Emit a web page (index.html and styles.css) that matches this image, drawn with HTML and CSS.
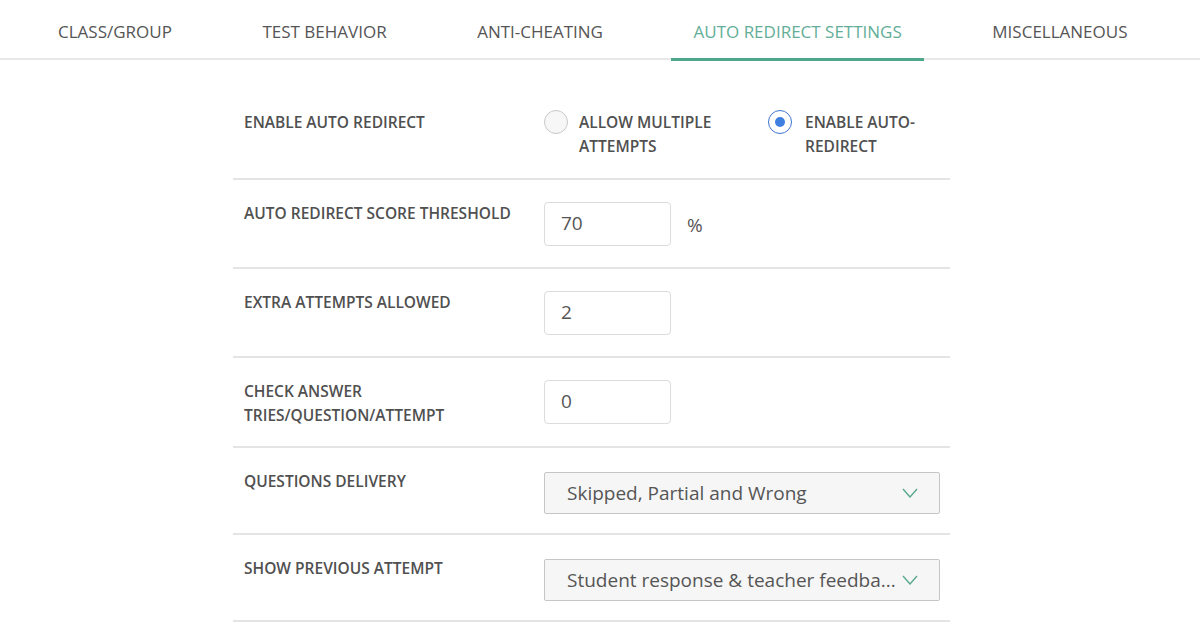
FILE: index.html
```html
<!DOCTYPE html>
<html>
<head>
<meta charset="utf-8">
<link rel="stylesheet" href="styles.css">
</head>
<body>
<nav class="tabs">
  <div class="tab">CLASS/GROUP</div>
  <div class="tab">TEST BEHAVIOR</div>
  <div class="tab">ANTI-CHEATING</div>
  <div class="tab active">AUTO REDIRECT SETTINGS</div>
  <div class="tab">MISCELLANEOUS</div>
</nav>
<main class="settings">
  <div class="row">
    <div class="label">ENABLE AUTO REDIRECT</div>
    <div class="control radios">
      <div class="radio-opt">
        <span class="radio"></span>
        <span class="radio-text">ALLOW MULTIPLE<br>ATTEMPTS</span>
      </div>
      <div class="radio-opt">
        <span class="radio checked"></span>
        <span class="radio-text">ENABLE AUTO-<br>REDIRECT</span>
      </div>
    </div>
  </div>
  <div class="row">
    <div class="label">AUTO REDIRECT SCORE THRESHOLD</div>
    <div class="control">
      <div class="input">70</div>
      <span class="unit">%</span>
    </div>
  </div>
  <div class="row">
    <div class="label">EXTRA ATTEMPTS ALLOWED</div>
    <div class="control">
      <div class="input">2</div>
    </div>
  </div>
  <div class="row">
    <div class="label">CHECK ANSWER<br>TRIES/QUESTION/ATTEMPT</div>
    <div class="control">
      <div class="input">0</div>
    </div>
  </div>
  <div class="row">
    <div class="label">QUESTIONS DELIVERY</div>
    <div class="control">
      <div class="select">
        <span class="select-text">Skipped, Partial and Wrong</span>
        <svg class="chev" width="16" height="10" viewBox="0 0 16 10"><path d="M1 1 L8 9 L15 1" fill="none" stroke="#5aa88e" stroke-width="1.4"/></svg>
      </div>
    </div>
  </div>
  <div class="row">
    <div class="label">SHOW PREVIOUS ATTEMPT</div>
    <div class="control">
      <div class="select">
        <span class="select-text">Student response &amp; teacher feedba...</span>
        <svg class="chev" width="16" height="10" viewBox="0 0 16 10"><path d="M1 1 L8 9 L15 1" fill="none" stroke="#5aa88e" stroke-width="1.4"/></svg>
      </div>
    </div>
  </div>
</main>
</body>
</html>
```

FILE: styles.css
```css
html, body {
  margin: 0;
  padding: 0;
  background: #fff;
}
body {
  font-family: "Open Sans", "Noto Sans", sans-serif;
  color: #444;
}
.tabs {
  display: flex;
  gap: 46.5px;
  padding-left: 36px;
  height: 58px;
  border-bottom: 2px solid #e8e8e8;
}
.tab {
  padding: 0 22px;
  font-size: 17px;
  line-height: 64px;
  height: 58px;
  color: #555;
  box-sizing: border-box;
  white-space: nowrap;
}
.tab.active {
  color: #63ae98;
  border-bottom: 3px solid #4ea68b;
  height: 61px;
  margin-bottom: -3px;
}
.settings {
  width: 717px;
  margin: 29px 0 0 233px;
}
.row {
  display: flex;
  align-items: flex-start;
  padding: 21px 11px 19px 11px;
  border-bottom: 2px solid #e4e4e4;
}
.label {
  width: 300px;
  flex: none;
  font-size: 15.5px;
  font-weight: 600;
  line-height: 24px;
  color: #505050;
}
.control {
  flex: 1;
  display: flex;
  align-items: center;
  gap: 16px;
}
.radios {
  align-items: flex-start;
  gap: 0;
  min-height: 49px;
}
.radio-opt {
  display: flex;
  align-items: flex-start;
  width: 224px;
}
.radio {
  width: 22px;
  height: 22px;
  border: 1.5px solid #c8c8c8;
  border-radius: 50%;
  background: #f7f7f7;
  margin-right: 11px;
  flex: none;
  display: flex;
  align-items: center;
  justify-content: center;
}
.radio-opt + .radio-opt .radio {
  margin-right: 13px;
}
.radio.checked {
  border-color: #3d74cc;
  background: #fff;
}
.radio.checked::after {
  content: "";
  width: 10px;
  height: 10px;
  border-radius: 50%;
  background: #3f7fdf;
}
.radio-text {
  font-size: 15.5px;
  font-weight: 600;
  line-height: 24px;
  color: #505050;
}
.input {
  width: 127px;
  height: 44px;
  margin: 1px 0 2px;
  box-sizing: border-box;
  border: 1.5px solid #dcdcdc;
  border-radius: 4px;
  padding-left: 16px;
  font-size: 19px;
  line-height: 41px;
  color: #555;
  background: #fff;
}
.unit {
  font-size: 19px;
  color: #555;
}
.select {
  width: 396px;
  height: 42px;
  margin-top: 3px;
  box-sizing: border-box;
  border: 1.5px solid #c6c6c6;
  border-radius: 2px;
  background: #f6f6f6;
  display: flex;
  align-items: center;
  justify-content: space-between;
  padding: 0 20px 0 22px;
}
.select-text {
  font-size: 19px;
  color: #555;
  white-space: nowrap;
}
.chev {
  flex: none;
  margin-right: 1px;
}
```
